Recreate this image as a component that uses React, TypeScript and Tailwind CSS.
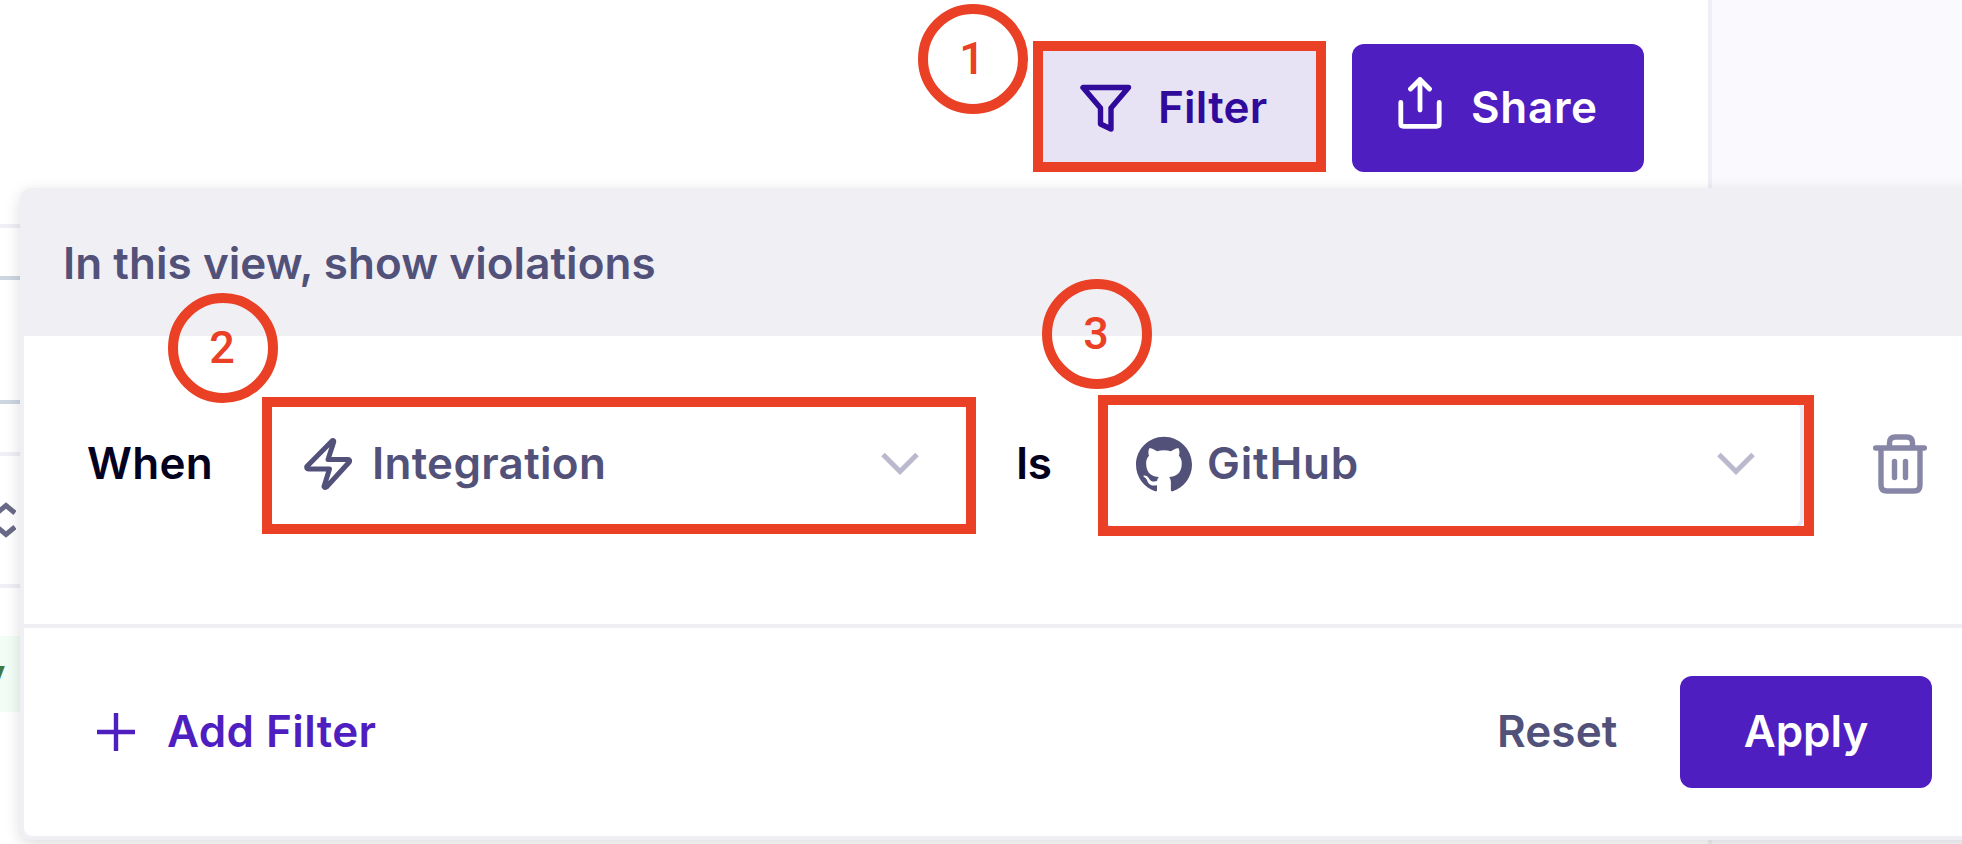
import type { ReactNode } from 'react';

function FilterIcon() {
  return (
    <svg width="52" height="48" viewBox="0 0 52 48" fill="none" stroke="#2f0a9b" strokeWidth="5.4" strokeLinejoin="round">
      <path d="M3 3.5H48.5L31 24V45L20.5 40V24Z" />
    </svg>
  );
}

function ShareIcon() {
  return (
    <svg width="44" height="52" viewBox="0 0 44 52" fill="none" stroke="#fff" strokeWidth="4.8" strokeLinecap="round" strokeLinejoin="round">
      <path d="M22 33V3" />
      <path d="M12.5 12L22 2.5L31.5 12" />
      <path d="M2.8 25.5V46.5Q2.8 49.3 5.6 49.3H38.4Q41.2 49.3 41.2 46.5V25.5" />
    </svg>
  );
}

function BoltIcon() {
  return (
    <svg width="48" height="52" viewBox="0 0 48 52" fill="none" stroke="#52517a" strokeWidth="5" strokeLinejoin="round">
      <path d="M28.5 2.5L2.8 28.5Q2.3 31 4.5 31H25.5L20 48.5Q21 50 22.5 49L45.3 24Q46.2 21.5 44 21.5H24L29.7 4Q30 2.5 28.5 2.5Z" />
    </svg>
  );
}

function GitHubIcon() {
  return (
    <svg width="56" height="56" viewBox="0 0 24 24" fill="#52517a">
      <path d="M12 .297c-6.63 0-12 5.373-12 12 0 5.303 3.438 9.8 8.205 11.385.6.113.82-.258.82-.577 0-.285-.01-1.04-.015-2.04-3.338.724-4.042-1.61-4.042-1.61C4.422 18.07 3.633 17.7 3.633 17.7c-1.087-.744.084-.729.084-.729 1.205.084 1.838 1.236 1.838 1.236 1.07 1.835 2.809 1.305 3.495.998.108-.776.417-1.305.76-1.605-2.665-.3-5.466-1.332-5.466-5.93 0-1.31.465-2.38 1.235-3.22-.135-.303-.54-1.523.105-3.176 0 0 1.005-.322 3.3 1.23.96-.267 1.98-.399 3-.405 1.02.006 2.04.138 3 .405 2.28-1.552 3.285-1.23 3.285-1.23.645 1.653.24 2.873.12 3.176.765.84 1.23 1.91 1.23 3.22 0 4.61-2.805 5.625-5.475 5.92.42.36.81 1.096.81 2.22 0 1.606-.015 2.896-.015 3.286 0 .315.21.69.825.57C20.565 22.092 24 17.592 24 12.297c0-6.627-5.373-12-12-12" />
    </svg>
  );
}

function ChevronDown() {
  return (
    <svg width="38" height="24" viewBox="0 0 38 24" fill="none" stroke="#bbb9cd" strokeWidth="5">
      <path d="M2 2.5L19 19.5L36 2.5" />
    </svg>
  );
}

function TrashIcon() {
  return (
    <svg width="54" height="60" viewBox="0 0 54 60" fill="none" stroke="#8786a6" strokeWidth="5.4" strokeLinecap="round">
      <path d="M2.7 14H51.3" />
      <path d="M16.5 13V9Q16.5 3 22.5 3H33.5Q39.5 3 39.5 9V13" />
      <path d="M8 15V51Q8 57 14 57H41Q47 57 47 51V15" />
      <path d="M21.5 27.5V43.5M32.5 27.5V43.5" />
    </svg>
  );
}

function PlusIcon() {
  return (
    <svg width="38" height="38" viewBox="0 0 38 38" fill="none" stroke="#4f1ec1" strokeWidth="4.4">
      <path d="M0 19H38M19 0V38" />
    </svg>
  );
}

function SortIcon() {
  return (
    <svg className="-ml-1" width="20" height="36" viewBox="0 0 20 36" fill="none" stroke="#6a6988" strokeWidth="5">
      <path d="M1 11L10 3.5L19 11M1 25L10 32.5L19 25" />
    </svg>
  );
}

function Marker({ className, children }: { className: string; children: ReactNode }) {
  return (
    <div
      className={`absolute flex size-[110px] items-center justify-center rounded-full border-[10px] border-[#ea4025] pr-[2px] pb-px font-[Roboto,sans-serif] text-[45px] leading-none font-medium text-[#ea4025] ${className}`}
    >
      {children}
    </div>
  );
}

function Toolbar() {
  return (
    <div className="flex h-[188px] items-start justify-end pt-11 pr-16">
      <button className="mr-[35px] flex h-32 w-[277px] items-center rounded-xl bg-[#e7e2f4] pl-10 text-[#2f0a9b]">
        <FilterIcon />
        <span className="ml-[26px] pb-[3px] tracking-[0.2px]">Filter</span>
      </button>
      <button className="flex h-32 w-[292px] items-center rounded-xl bg-[#4f1ec1] pb-[3px] pl-[46px] text-white">
        <span className="-mt-2 flex">
          <ShareIcon />
        </span>
        <span className="ml-[29px] tracking-[0.7px]">Share</span>
      </button>
    </div>
  );
}

function TableBehind() {
  return (
    <div className="flex flex-col">
      <div className="h-10 border-b-4 border-[#f0eff5]" />
      <div className="h-[52px] border-b-4 border-[#ccd5e0]" />
      <div className="h-[124px] border-b-4 border-[#ccd5e0]" />
      <div className="h-[52px] border-b-4 border-[#f0eff5]" />
      <div className="flex h-[132px] items-center border-b-4 border-[#f0eff5]">
        <SortIcon />
      </div>
      <div className="mt-12 flex h-[76px] items-center overflow-hidden bg-[#f2fef5] text-[40px] text-[#3f7a45]">
        <span className="-ml-[18px]">y</span>
      </div>
    </div>
  );
}

function FilterPanel() {
  return (
    <section className="absolute top-[188px] left-5 flex h-[652px] w-[2000px] flex-col rounded-xl border-4 border-[#f0eff4] bg-white shadow-[0_4px_16px_rgba(0,0,0,0.14)]">
      <header className="flex h-36 items-center bg-[#f0eff4] pl-[39px] text-[#52517a]">
        <span className="-mt-[3px] tracking-[0.05px]">In this view, show violations</span>
      </header>
      <div className="flex h-[292px] items-start border-b-4 border-[#f0eff4] pt-[62px] pl-[63px] text-[#52517a]">
        <div className="flex h-[132px] items-center">
          <span className="w-[180px] pb-[3px] tracking-[0.3px] text-[#040020]">When</span>
          <div className="flex h-[132px] w-[703px] items-center rounded-xl border-4 border-[#f0eff4] pr-[47px] pl-[33px]">
            <BoltIcon />
            <span className="ml-5 grow pb-[3px] tracking-[0.3px]">Integration</span>
            <ChevronDown />
          </div>
          <span className="ml-[46px] w-[86px] pb-[3px] tracking-[-0.5px] text-[#040020]">Is</span>
          <div className="flex h-[132px] w-[702px] items-center rounded-xl border-4 border-[#ebeaf2] pr-[45px] pl-[30px]">
            <GitHubIcon />
            <span className="ml-[15px] grow pb-[3px] tracking-[0.8px]">GitHub</span>
            <ChevronDown />
          </div>
          <span className="ml-[69px] flex">
            <TrashIcon />
          </span>
        </div>
      </div>
      <footer className="flex h-[208px] items-center pl-[73px]">
        <button className="flex w-[1323px] items-center text-[#4f1ec1]">
          <PlusIcon />
          <span className="ml-8 pb-[3px] tracking-[0.4px]">Add Filter</span>
        </button>
        <button className="ml-[77px] w-[183px] pb-[3px] text-left tracking-[0.1px] text-[#52517a]">Reset</button>
        <button className="h-28 w-[252px] rounded-xl bg-[#4f1ec1] pb-[3px] text-center text-white">Apply</button>
      </footer>
    </section>
  );
}

export default function App() {
  return (
    <div className="relative flex h-[844px] w-full overflow-hidden bg-white font-[Inter,sans-serif] text-[44px] leading-[44px] font-semibold whitespace-nowrap">
      <main className="w-[1712px] shrink-0 border-r-4 border-[#f0eff5]">
        <Toolbar />
        <TableBehind />
      </main>
      <aside className="grow bg-[#faf9fe]" />
      <FilterPanel />
      <div className="absolute top-[41px] left-[1033px] h-[131px] w-[293px] border-[10px] border-[#ea4025]" />
      <div className="absolute top-[397px] left-[262px] h-[137px] w-[714px] border-[10px] border-[#ea4025]" />
      <div className="absolute top-[395px] left-[1098px] h-[141px] w-[716px] border-[10px] border-[#ea4025]" />
      <Marker className="top-1 left-[918px]">1</Marker>
      <Marker className="top-[293px] left-[168px]">2</Marker>
      <Marker className="top-[279px] left-[1042px]">3</Marker>
    </div>
  );
}
